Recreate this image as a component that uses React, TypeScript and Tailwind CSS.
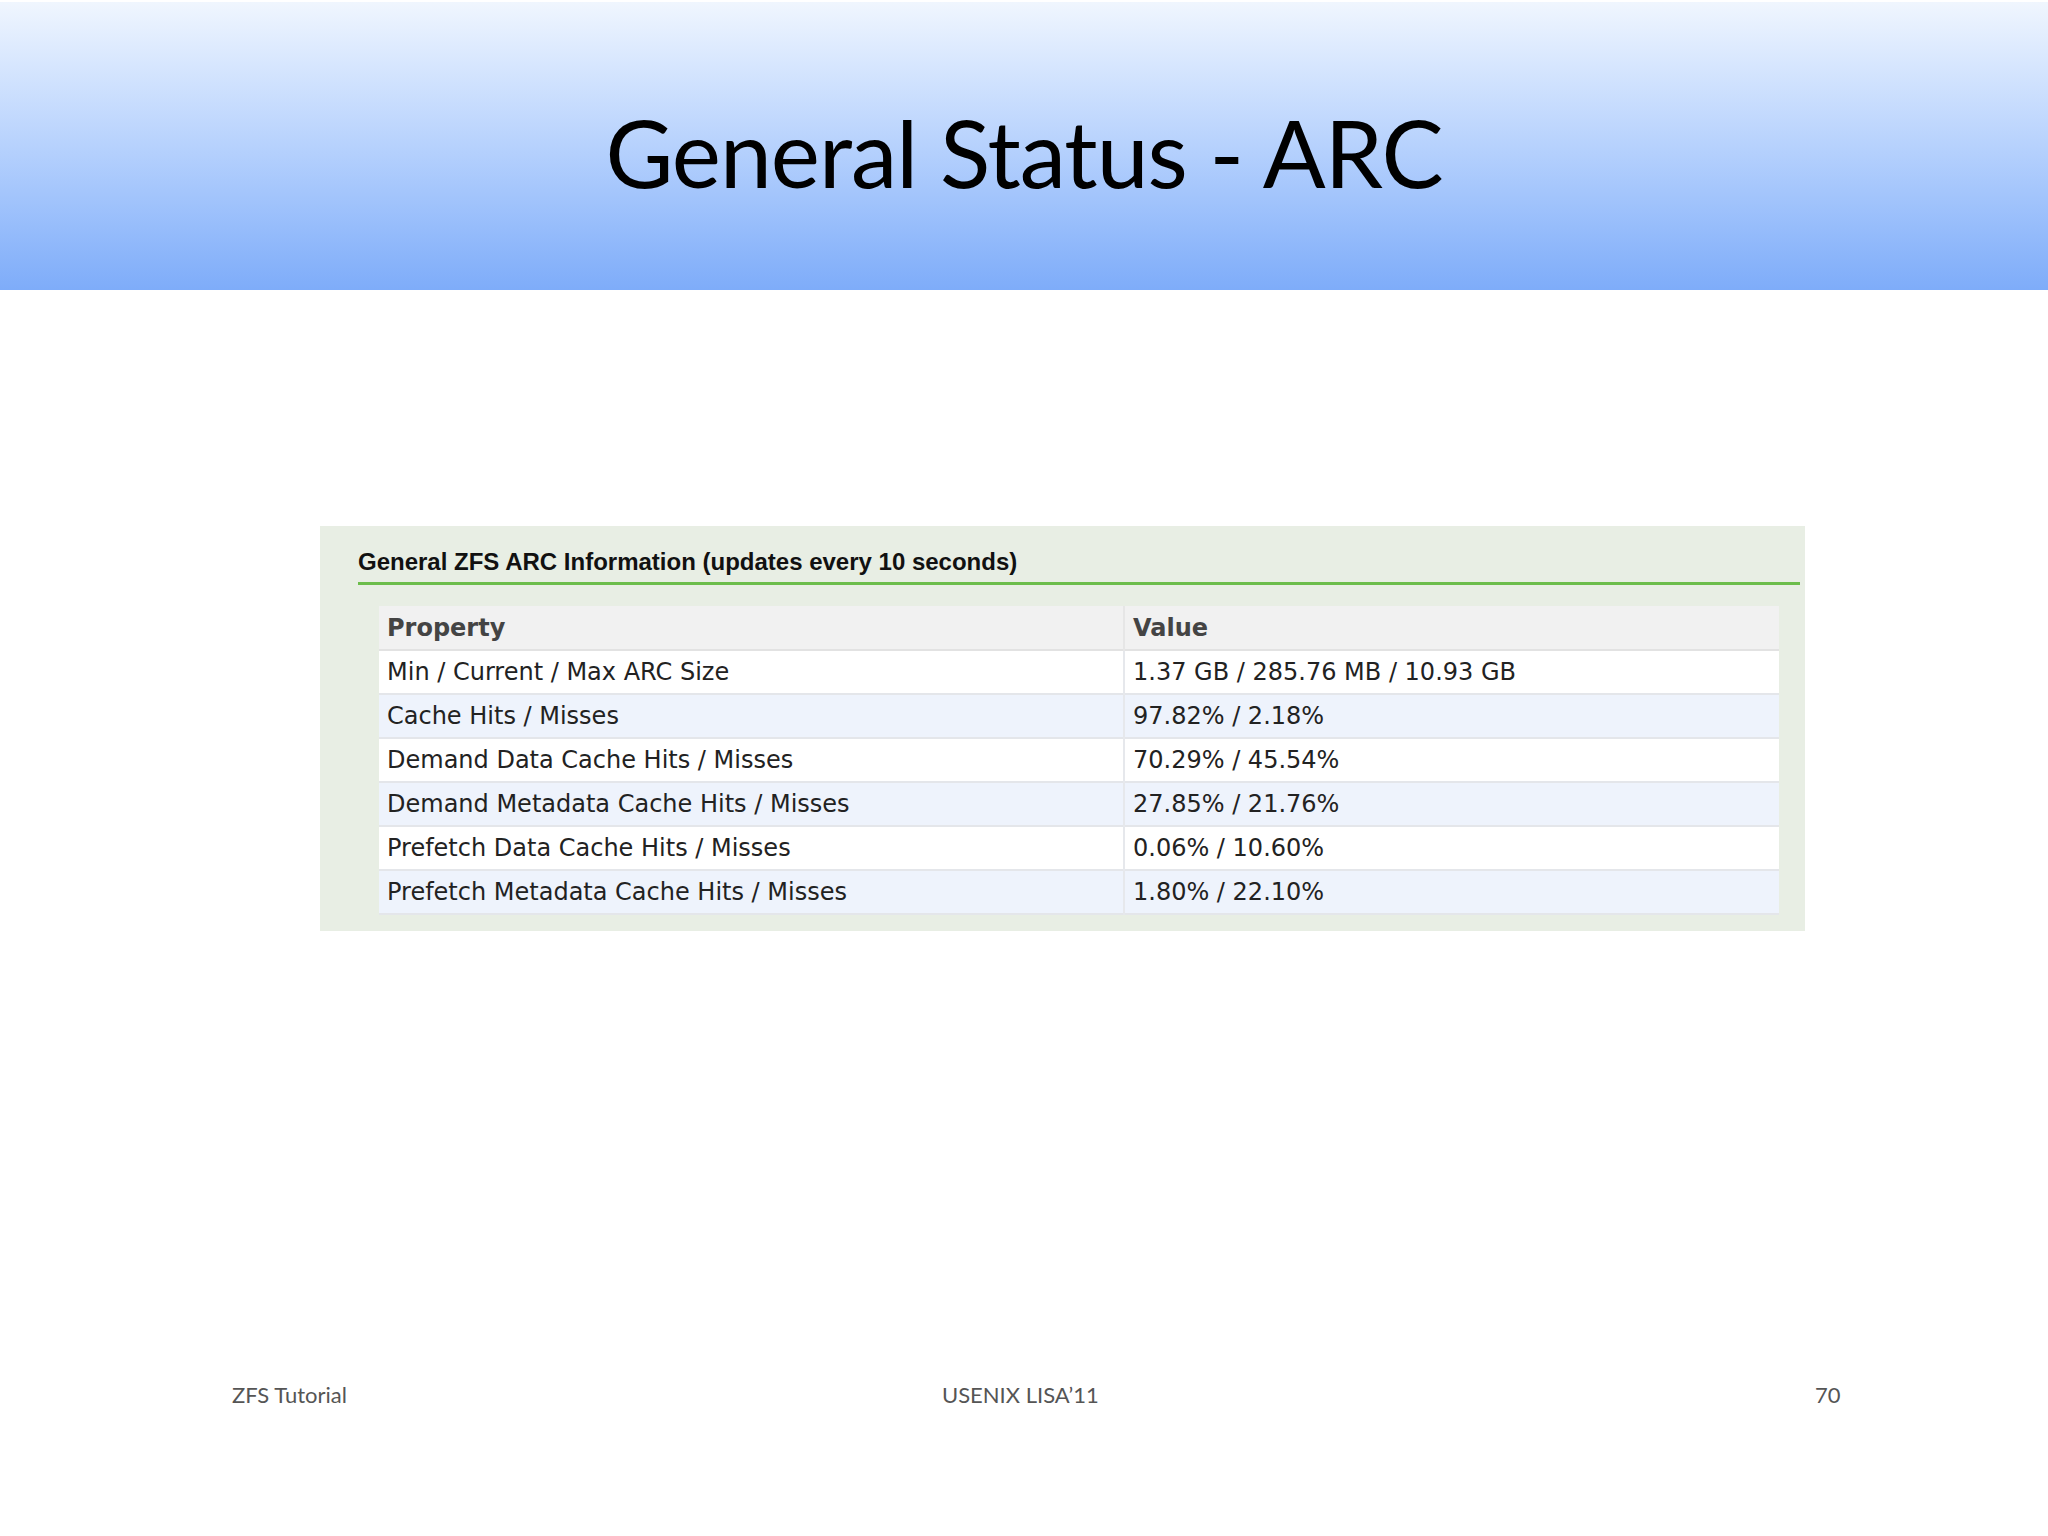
import React from 'react';

const rows: [string, string][] = [
  ['Min / Current / Max ARC Size', '1.37 GB / 285.76 MB / 10.93 GB'],
  ['Cache Hits / Misses', '97.82% / 2.18%'],
  ['Demand Data Cache Hits / Misses', '70.29% / 45.54%'],
  ['Demand Metadata Cache Hits / Misses', '27.85% / 21.76%'],
  ['Prefetch Data Cache Hits / Misses', '0.06% / 10.60%'],
  ['Prefetch Metadata Cache Hits / Misses', '1.80% / 22.10%'],
];

const App: React.FC = () => {
  return (
    <div className="w-[2048px] h-[1536px] bg-white flex flex-col font-['Lato',sans-serif]">
      <div className="h-[290px] border-t-2 border-white bg-gradient-to-b from-[#f0f6fe] to-[#7eacf9] flex items-center justify-center">
        <h1 className="text-[93px] leading-none text-black tracking-[-1px] mt-[12px]">General Status - ARC</h1>
      </div>

      <div className="ml-[320px] mt-[236px] w-[1485px] h-[405px] bg-[#e8eee4] pt-[21px] pl-[38px] pr-[5px]">
        <div className="border-b-[3px] border-[#6cbd4b] pb-[5px]">
          <h2 className="font-['Liberation_Sans',Arial,sans-serif] font-bold text-[24px] leading-[30px] text-[#111]">
            General ZFS ARC Information (updates every 10 seconds)
          </h2>
        </div>
        <table className="ml-[21px] mt-[21px] w-[1400px] border-collapse font-['DejaVu_Sans',sans-serif] text-[24px] text-[#222]">
          <thead>
            <tr className="bg-[#f1f1f1] h-[44px] border-b-2 border-[#e2e2e2]">
              <th className="w-[745px] text-left font-bold text-[#444] pl-[8px] border-r-2 border-[#e6e6e6]">Property</th>
              <th className="text-left font-bold text-[#444] pl-[8px]">Value</th>
            </tr>
          </thead>
          <tbody>
            {rows.map(([p, v], i) => (
              <tr key={p} className={`h-[44px] border-b-2 border-[#e4e6ea] ${i % 2 === 0 ? 'bg-white' : 'bg-[#eef3fc]'}`}>
                <td className="pl-[8px] border-r-2 border-[#e6e8ec]">{p}</td>
                <td className="pl-[8px]">{v}</td>
              </tr>
            ))}
          </tbody>
        </table>
      </div>

      <div className="mt-[447px] relative h-[30px] text-[22px] text-[#555]">
        <span className="absolute left-[232px] top-0">ZFS Tutorial</span>
        <span className="absolute left-[942px] top-0">USENIX LISA’11</span>
        <span className="absolute left-[1815px] top-0">70</span>
      </div>
    </div>
  );
};

export default App;
